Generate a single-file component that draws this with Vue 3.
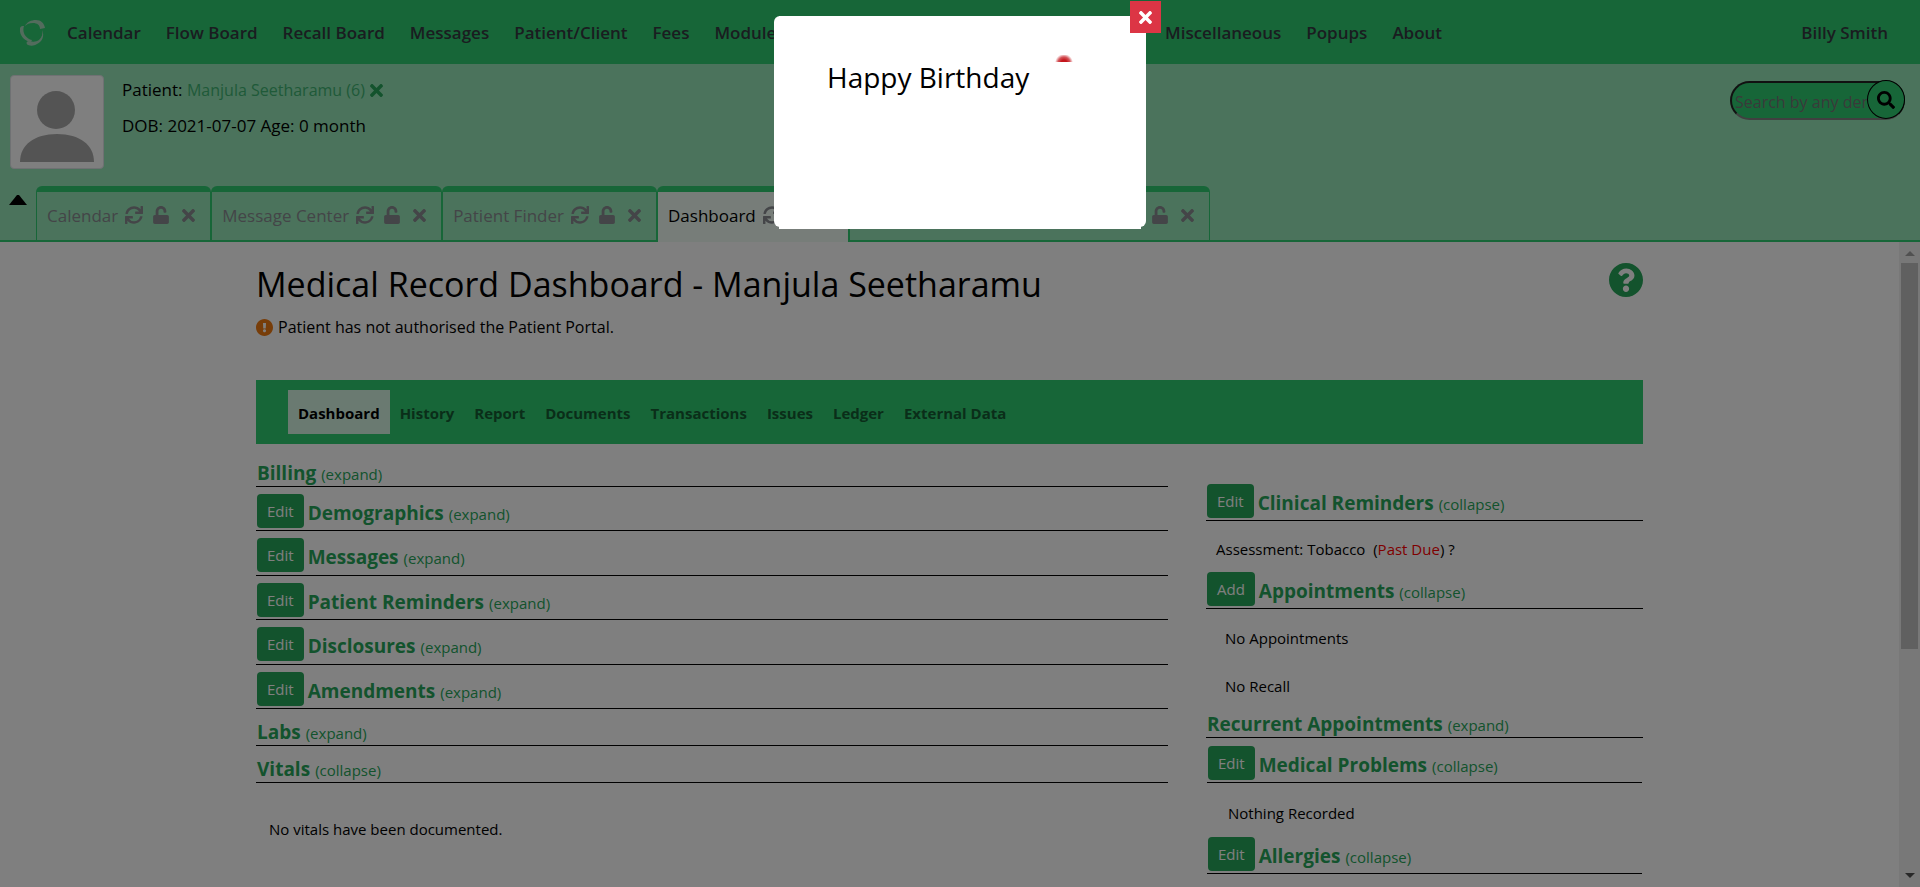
<script setup>
const icons = {
  times: {
    box: '0 80 352 352',
    d: 'M242.72 256l100.07-100.07c12.28-12.28 12.28-32.19 0-44.48l-22.24-22.24c-12.28-12.28-32.19-12.28-44.48 0L176 189.28 75.93 89.21c-12.28-12.28-32.19-12.28-44.48 0L9.21 111.45c-12.28 12.28-12.28 32.19 0 44.48L109.28 256 9.21 356.07c-12.28 12.28-12.28 32.19 0 44.48l22.24 22.24c12.28 12.28 32.2 12.28 44.48 0L176 322.72l100.07 100.07c12.28 12.28 32.2 12.28 44.48 0l22.24-22.24c12.28-12.28 12.28-32.19 0-44.48L242.72 256z',
  },
  sync: {
    box: '0 0 512 512',
    d: 'M440.65 12.57l4 82.77A247.16 247.16 0 0 0 255.83 8C134.73 8 33.91 94.92 12.29 209.82A12 12 0 0 0 24.09 224h49.05a12 12 0 0 0 11.67-9.26 175.91 175.91 0 0 1 317-56.94l-101.46-4.86a12 12 0 0 0-12.57 12v47.41a12 12 0 0 0 12 12H500a12 12 0 0 0 12-12V12a12 12 0 0 0-12-12h-47.37a12 12 0 0 0-11.98 12.57zM255.83 432a175.61 175.61 0 0 1-146-77.8l101.8 4.87a12 12 0 0 0 12.57-12v-47.4a12 12 0 0 0-12-12H12a12 12 0 0 0-12 12V500a12 12 0 0 0 12 12h47.35a12 12 0 0 0 12-12.6l-4.15-82.57A247.17 247.17 0 0 0 255.83 504c121.11 0 221.93-86.92 243.55-201.82a12 12 0 0 0-11.8-14.18h-49.05a12 12 0 0 0-11.67 9.26A175.86 175.86 0 0 1 255.83 432z',
  },
  unlock: {
    box: '0 0 448 512',
    d: 'M400 256H152V152.9c0-39.6 31.7-72.5 71.3-72.9 40-.4 72.7 32.1 72.7 72v16c0 13.3 10.7 24 24 24h32c13.3 0 24-10.7 24-24v-16C376 68 307.5-.3 223.5 0 139.5.3 72 69.5 72 153.5V256H48c-26.5 0-48 21.5-48 48v160c0 26.5 21.5 48 48 48h352c26.5 0 48-21.5 48-48V304c0-26.5-21.5-48-48-48z',
  },
  search: {
    box: '0 0 512 512',
    d: 'M505 442.7L405.3 343c-4.5-4.5-10.6-7-17-7H372c27.6-35.3 44-79.7 44-128C416 93.1 322.9 0 208 0S0 93.1 0 208s93.1 208 208 208c48.3 0 92.7-16.4 128-44v16.3c0 6.4 2.5 12.5 7 17l99.7 99.7c9.4 9.4 24.6 9.4 33.9 0l28.3-28.3c9.4-9.4 9.4-24.6.1-34zM208 336c-70.7 0-128-57.2-128-128 0-70.7 57.2-128 128-128 70.7 0 128 57.2 128 128 0 70.7-57.2 128-128 128z',
  },
  question: {
    box: '8 8 496 496',
    d: 'M504 256c0 136.997-111.043 248-248 248S8 392.997 8 256C8 119.083 119.043 8 256 8s248 111.083 248 248zM262.655 90c-54.497 0-89.255 22.957-116.549 63.758-3.536 5.286-2.353 12.415 2.715 16.258l34.699 26.31c5.205 3.947 12.621 3.008 16.665-2.122 17.864-22.658 30.113-35.797 57.303-35.797 20.429 0 45.698 13.148 45.698 32.958 0 14.976-12.363 22.667-32.534 33.976C247.128 238.528 216 254.941 216 296v4c0 6.627 5.373 12 12 12h56c6.627 0 12-5.373 12-12v-1.333c0-28.462 83.186-29.647 83.186-106.667 0-58.002-60.165-102-116.531-102zM256 338c-25.365 0-46 20.635-46 46 0 25.364 20.635 46 46 46s46-20.636 46-46c0-25.364-20.635-46-46-46z',
  },
  exclamation: {
    box: '8 8 496 496',
    d: 'M504 256c0 136.997-111.043 248-248 248S8 392.997 8 256C8 119.083 119.043 8 256 8s248 111.083 248 248zm-248 50c-25.405 0-46 20.595-46 46s20.595 46 46 46 46-20.595 46-46-20.595-46-46-46zm-43.673-165.346l7.418 136c.347 6.364 5.609 11.346 11.982 11.346h48.546c6.373 0 11.635-4.982 11.982-11.346l7.418-136c.375-6.874-5.098-12.654-11.982-12.654h-63.383c-6.884 0-12.356 5.78-11.981 12.654z',
  },
}

const menu = ['Calendar', 'Flow Board', 'Recall Board', 'Messages', 'Patient/Client', 'Fees', 'Modules', 'Procedures', 'Administration', 'Reports', 'Miscellaneous', 'Popups', 'About']

const tabs = [
  { label: 'Calendar' },
  { label: 'Message Center' },
  { label: 'Patient Finder' },
  { label: 'Dashboard', active: true },
  { label: 'Patient Report', wide: true },
]

const sections = ['Dashboard', 'History', 'Report', 'Documents', 'Transactions', 'Issues', 'Ledger', 'External Data']

const editable = ['Demographics', 'Messages', 'Patient Reminders', 'Disclosures', 'Amendments']
</script>

<template>
  <div class="page">
    <nav class="navbar">
      <svg class="logo" viewBox="0 0 26 26" aria-hidden="true">
        <path d="M5 6C7 2 11 0 16 0c5 0 8 3 9 8l-5 1c0-4-3-6-7-6-4 0-6 1-8 3z" />
        <path d="M0 8c1-2 2-2 4-2-2 6 1 12 8 14l-1 2C4 21-1 15 0 8z" />
        <path d="M22 10c3 6 0 12-5 14-3 2-6 2-9 1-2-1-2-4 1-4 4 1 7 1 10-1 3-3 4-6 3-10z" />
      </svg>
      <a v-for="item in menu" :key="item" href="#" class="nav-item">{{ item }}</a>
      <a href="#" class="nav-item user">Billy Smith</a>
    </nav>

    <header class="patient-bar">
      <div class="patient-row">
        <div class="avatar">
          <svg viewBox="0 0 92 92" aria-hidden="true">
            <circle cx="45" cy="34" r="19" />
            <path d="M9 86c0-17 14-28 37-28s37 11 37 28z" />
          </svg>
        </div>
        <div class="patient-info">
          <div class="patient-name">
            <span>Patient: <a href="#" class="patient-link">Manjula Seetharamu (6)</a></span>
            <button type="button" class="clear" aria-label="Clear patient">
              <svg :viewBox="icons.times.box"><path :d="icons.times.d" /></svg>
            </button>
          </div>
          <div>DOB: 2021-07-07 Age: 0 month</div>
        </div>
        <form class="search" @submit.prevent>
          <input type="text" placeholder="Search by any demographics" aria-label="Search by any demographics" />
          <button type="submit" aria-label="Search">
            <svg :viewBox="icons.search.box"><path :d="icons.search.d" /></svg>
          </button>
        </form>
      </div>
      <div class="tab-row">
        <button type="button" class="collapse" aria-label="Hide patient details">
          <svg viewBox="0 0 18 10"><path d="M0 10L8 0h2l8 10z" /></svg>
        </button>
        <div v-for="tab in tabs" :key="tab.label" class="tab" :class="{ active: tab.active, wide: tab.wide }">
          <span class="tab-label">{{ tab.label }}</span>
          <svg class="icon-sync" :viewBox="icons.sync.box"><path :d="icons.sync.d" /></svg>
          <svg class="icon-unlock" :viewBox="icons.unlock.box"><path :d="icons.unlock.d" /></svg>
          <svg class="icon-times" :viewBox="icons.times.box"><path :d="icons.times.d" /></svg>
        </div>
      </div>
    </header>

    <div class="frame">
      <main class="content">
        <div class="title-row">
          <h1>Medical Record Dashboard - Manjula Seetharamu</h1>
          <a href="#" class="help" aria-label="Help">
            <svg :viewBox="icons.question.box"><path :d="icons.question.d" /></svg>
          </a>
        </div>
        <p class="notice">
          <svg :viewBox="icons.exclamation.box"><path :d="icons.exclamation.d" /></svg>
          Patient has not authorised the Patient Portal.
        </p>

        <nav class="subnav">
          <a v-for="(s, i) in sections" :key="s" href="#" :class="{ current: i === 0 }">{{ s }}</a>
        </nav>

        <div class="columns">
          <section class="left">
            <div class="head plain">
              <a href="#" class="name">Billing</a><a href="#" class="toggle">(expand)</a>
            </div>
            <div class="stack">
              <div v-for="name in editable" :key="name" class="head">
                <button type="button" class="btn">Edit</button>
                <a href="#" class="name">{{ name }}</a><a href="#" class="toggle">(expand)</a>
              </div>
            </div>
            <div class="head plain">
              <a href="#" class="name">Labs</a><a href="#" class="toggle">(expand)</a>
            </div>
            <div class="head plain">
              <a href="#" class="name">Vitals</a><a href="#" class="toggle">(collapse)</a>
            </div>
            <p class="vitals">No vitals have been documented.</p>
          </section>

          <section class="right">
            <div class="head">
              <button type="button" class="btn">Edit</button>
              <a href="#" class="name">Clinical Reminders</a><a href="#" class="toggle">(collapse)</a>
            </div>
            <p class="reminder">Assessment: Tobacco &nbsp;(<span class="due">Past Due</span>) ?</p>
            <div class="head">
              <button type="button" class="btn">Add</button>
              <a href="#" class="name">Appointments</a><a href="#" class="toggle">(collapse)</a>
            </div>
            <p class="appointments">No Appointments</p>
            <p class="recall">No Recall</p>
            <div class="head plain">
              <a href="#" class="name">Recurrent Appointments</a><a href="#" class="toggle">(expand)</a>
            </div>
            <div class="issues">
              <div class="head">
                <button type="button" class="btn">Edit</button>
                <a href="#" class="name">Medical Problems</a><a href="#" class="toggle">(collapse)</a>
              </div>
              <p class="nothing">Nothing Recorded</p>
              <div class="head">
                <button type="button" class="btn">Edit</button>
                <a href="#" class="name">Allergies</a><a href="#" class="toggle">(collapse)</a>
              </div>
            </div>
          </section>
        </div>
      </main>
      <div class="scrollbar" aria-hidden="true">
        <span class="arrow up"></span>
        <div class="track"><div class="thumb"></div></div>
        <span class="arrow down"></span>
      </div>
    </div>

    <div class="backdrop"></div>
    <div class="dialog" role="dialog" aria-labelledby="dialog-title">
      <button type="button" class="close" aria-label="Close">
        <svg :viewBox="icons.times.box"><path :d="icons.times.d" /></svg>
      </button>
      <div class="dialog-body">
        <h2 id="dialog-title">Happy Birthday</h2>
        <span class="balloon"></span>
      </div>
    </div>
  </div>
</template>

<style>
body {
  margin: 0;
  overflow: hidden;
}
</style>

<style scoped>
* {
  box-sizing: border-box;
}

.page {
  height: 100vh;
  display: flex;
  flex-direction: column;
  background: #fff;
  color: #000;
  font-family: "Open Sans", "Noto Sans", sans-serif;
  font-size: 16px;
}

a {
  color: inherit;
  text-decoration: none;
}

button {
  font-family: inherit;
  border: 0;
  padding: 0;
  background: none;
}

svg {
  display: block;
  fill: currentColor;
}

h1,
h2,
p {
  margin: 0;
  font-weight: 400;
}

.navbar {
  flex: none;
  display: flex;
  align-items: center;
  gap: 25px;
  height: 64px;
  padding: 2px 32px 0 20px;
  background: #2ecc71;
  color: #343a40;
}

.logo {
  width: 26px;
  height: 26px;
  margin-right: -4px;
  fill: #a6d8bb;
}

.nav-item {
  font-size: 17px;
  font-weight: 600;
  line-height: 24px;
  white-space: nowrap;
}

.user {
  margin-left: auto;
}

.patient-bar {
  flex: none;
  background: #97e6b8;
  border-bottom: 2px solid #2ecc71;
}

.patient-row {
  display: flex;
  height: 122px;
  padding: 11px 15px 0 10px;
}

.avatar {
  width: 94px;
  height: 94px;
  border: 1px solid #dee2e6;
  border-radius: 4px;
  background: #fff;
  color: #a9a9a9;
}

.patient-info {
  display: flex;
  flex-direction: column;
  gap: 12px;
  padding: 3px 0 0 18px;
  font-size: 17px;
  line-height: 24px;
}

.patient-name {
  display: flex;
  align-items: center;
  gap: 5px;
}

.patient-link {
  color: #3eb472;
  font-size: 16px;
}

.clear {
  color: #27a65a;
}

.clear svg {
  width: 13px;
  height: 13px;
}

.search {
  position: relative;
  display: flex;
  width: 175px;
  height: 40px;
  margin: 5px 0 0 auto;
}

.search input {
  width: 100%;
  height: 39px;
  margin-top: 1px;
  padding: 2px 36px 0 3px;
  border: 2px solid #222;
  border-bottom-color: #808080;
  border-radius: 20px;
  background: #2ecc71;
  font-family: inherit;
  font-size: 16px;
}

.search input::placeholder {
  color: #757575;
  opacity: 1;
}

.search button {
  position: absolute;
  top: 0;
  right: 0;
  display: grid;
  place-items: center;
  width: 38px;
  height: 39px;
  border: 1px solid #000;
  border-radius: 50%;
  background: #2ecc71;
  color: #000;
}

.search svg {
  width: 18px;
  height: 18px;
}

.tab-row {
  display: flex;
  height: 54px;
}

.collapse {
  width: 36px;
  padding: 9px 9px 0 9px;
  align-self: flex-start;
  color: #000;
}

.tab {
  display: flex;
  align-items: center;
  padding: 0 15px 2px 10px;
  border: 1px solid #2ecc71;
  border-top-width: 6px;
  border-bottom: 0;
  border-radius: 6px 6px 0 0;
  color: #888b90;
  font-size: 17px;
  white-space: nowrap;
}

.tab.active {
  margin-bottom: -2px;
  padding-bottom: 4px;
  background: #eefaf3;
}

.tab.active .tab-label {
  color: #000;
}

.tab.wide {
  width: 361px;
}

.tab.wide .tab-label {
  margin-right: auto;
}

.icon-sync {
  width: 18px;
  height: 18px;
  margin-left: 7px;
}

.icon-unlock {
  width: 16px;
  height: 18px;
  margin-left: 10px;
}

.icon-times {
  width: 13px;
  height: 13px;
  margin-left: 13px;
}

.frame {
  flex: 1;
  min-height: 0;
  display: flex;
}

.content {
  flex: 1;
  min-width: 0;
  overflow: hidden;
  padding: 21px 256px 0;
}

.title-row {
  display: flex;
  justify-content: space-between;
  height: 50px;
}

h1 {
  font-size: 34px;
  font-weight: 500;
  line-height: 42px;
}

.help {
  color: #27a65a;
}

.help svg {
  width: 34px;
  height: 34px;
}

.notice {
  display: flex;
  align-items: center;
  gap: 5px;
  margin-bottom: 39px;
  font-size: 16px;
  line-height: 28px;
}

.notice svg {
  width: 17px;
  height: 17px;
  color: #ef7a12;
}

.subnav {
  display: flex;
  align-items: center;
  height: 64px;
  padding: 0 32px;
  background: #2ecc71;
  color: #155c33;
  font-size: 15px;
  font-weight: 700;
}

.subnav a {
  padding: 2px 10px 0;
  line-height: 42px;
}

.subnav .current {
  background: #d5f5e3;
  color: #000;
}

.columns {
  display: flex;
  gap: 38px;
}

.left {
  flex: 1;
  padding-top: 6px;
}

.right {
  width: 437px;
  padding-top: 32px;
}

.head {
  display: flex;
  align-items: baseline;
  height: 45px;
  padding: 8px 1px 0;
  border-bottom: 1px solid #000;
  color: #27a65a;
}

.head.plain {
  height: 37px;
  padding-top: 4px;
}

.stack {
  display: flex;
  flex-direction: column;
  min-height: 222px;
}

.stack .head {
  flex: 1;
  padding-top: 7px;
}

.btn {
  align-self: flex-start;
  height: 34px;
  margin-right: 4px;
  padding: 0 10px;
  border-radius: 4px;
  background: #27a65a;
  color: #fff;
  font-size: 15px;
}

.name {
  margin-top: 7px;
  font-size: 19px;
  font-weight: 700;
  line-height: 24px;
}

.toggle {
  margin-left: 5px;
  font-size: 15px;
  line-height: 20px;
}

.left p,
.right p {
  font-size: 15px;
  line-height: 20px;
}

.left .vitals {
  padding: 36px 13px 0;
}

.right .reminder {
  padding: 18px 10px 5px;
}

.right .appointments {
  padding: 19px 19px 0;
}

.right .recall {
  padding: 28px 19px 5px;
}

.issues {
  padding: 0 1px;
}

.right .nothing {
  padding: 20px 21px 6px;
}

.due {
  color: #f00;
}

.scrollbar {
  display: flex;
  flex-direction: column;
  align-items: center;
  width: 21px;
  padding: 9px 2px;
  background: #f1f1f1;
}

.arrow {
  border: 5px solid transparent;
  border-top-width: 0;
  border-bottom: 5px solid #a3a3a3;
}

.arrow.down {
  border-top: 5px solid #505050;
  border-bottom-width: 0;
}

.track {
  flex: 1;
  width: 17px;
  margin: 7px 0;
}

.thumb {
  height: 64%;
  background: #c1c1c1;
}

.backdrop {
  position: fixed;
  inset: 0;
  background: rgba(0, 0, 0, 0.5);
}

.dialog {
  position: fixed;
  top: 16px;
  left: 50%;
  width: 372px;
  height: 211px;
  margin-left: -186px;
  padding: 0 5px;
  border-radius: 6px;
  background: #fff;
}

.dialog-body {
  display: flex;
  align-items: flex-start;
  height: 213px;
  padding: 39px 48px 0;
  background: #fff;
}

h2 {
  font-size: 28px;
  font-weight: 500;
  line-height: 44px;
}

.balloon {
  width: 18px;
  height: 7px;
  margin-left: auto;
  margin-right: 20px;
  background: radial-gradient(circle at 9px 8px, #c4161c 3px, #d4555a 6px, transparent 9px);
}

.close {
  position: absolute;
  top: -15px;
  right: -15px;
  display: grid;
  place-items: center;
  width: 31px;
  height: 32px;
  background: #dc3545;
  color: #fff;
}

.close svg {
  width: 13px;
  height: 13px;
}
</style>
